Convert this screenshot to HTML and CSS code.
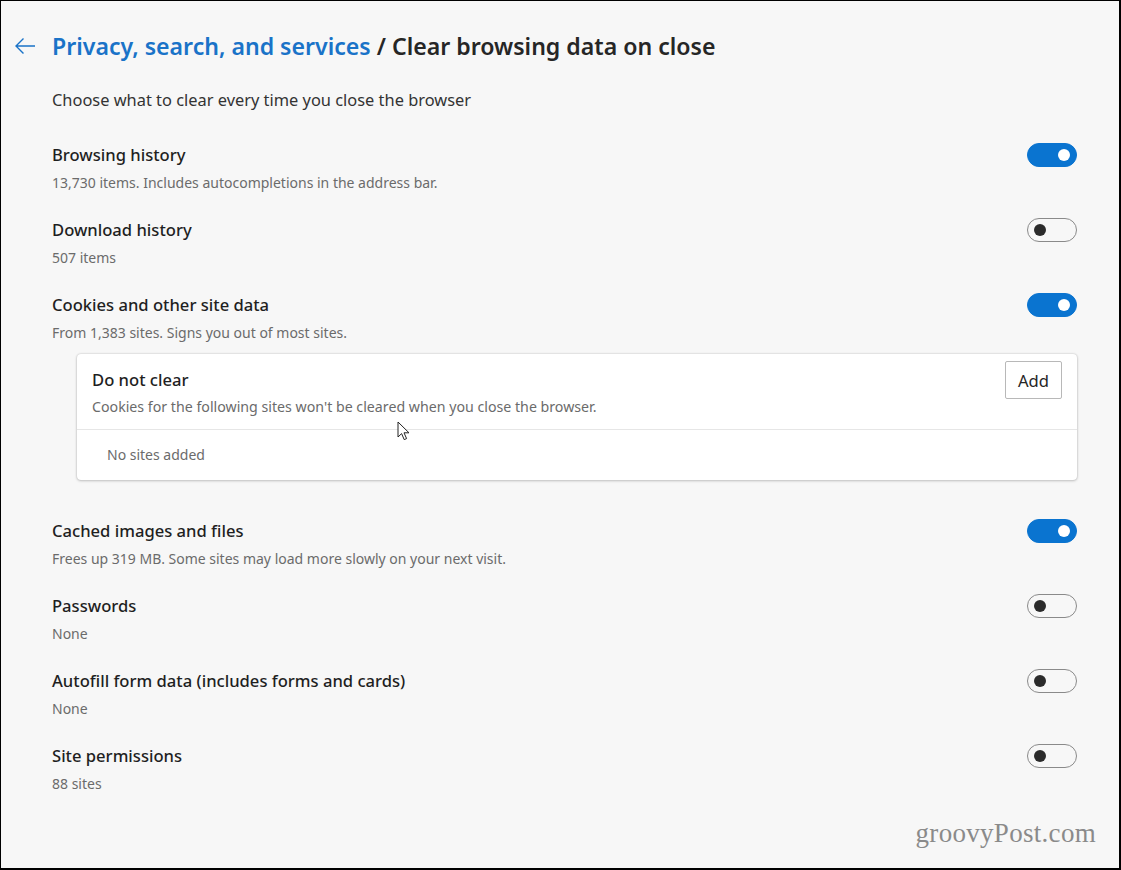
FILE: index.html
```html
<!DOCTYPE html>
<html>
<head>
<meta charset="utf-8">
<link rel="stylesheet" href="styles.css">
</head>
<body>
<div class="frame">
  <header class="header">
    <svg class="back" width="22" height="18" viewBox="0 0 22 18"><path d="M21 9H2M9.5 1.5L2 9l7.5 7.5" fill="none" stroke="#1a73c8" stroke-width="1.4"/></svg>
    <h1 class="title"><span class="crumb">Privacy, search, and services</span> / Clear browsing data on close</h1>
  </header>
  <p class="intro">Choose what to clear every time you close the browser</p>

  <div class="row">
    <div class="text"><div class="name">Browsing history</div><div class="desc">13,730 items. Includes autocompletions in the address bar.</div></div>
    <span class="toggle on"></span>
  </div>
  <div class="row">
    <div class="text"><div class="name">Download history</div><div class="desc">507 items</div></div>
    <span class="toggle"></span>
  </div>
  <div class="row row-cookies">
    <div class="text"><div class="name">Cookies and other site data</div><div class="desc">From 1,383 sites. Signs you out of most sites.</div></div>
    <span class="toggle on"></span>
  </div>
  <div class="card">
    <div class="card-head">
      <div class="card-text">
        <div class="card-title">Do not clear</div>
        <div class="desc">Cookies for the following sites won't be cleared when you close the browser.</div>
      </div>
      <button class="add">Add</button>
    </div>
    <div class="card-empty">No sites added</div>
    <svg class="cursor" width="14" height="20" viewBox="0 0 14 20"><path d="M1 1v15l3.6-3.4 2.6 6 2.4-1-2.6-5.8H12z" fill="#fff" stroke="#222" stroke-width="1"/></svg>
  </div>
  <div class="row">
    <div class="text"><div class="name">Cached images and files</div><div class="desc">Frees up 319 MB. Some sites may load more slowly on your next visit.</div></div>
    <span class="toggle on"></span>
  </div>
  <div class="row">
    <div class="text"><div class="name">Passwords</div><div class="desc">None</div></div>
    <span class="toggle"></span>
  </div>
  <div class="row">
    <div class="text"><div class="name">Autofill form data (includes forms and cards)</div><div class="desc">None</div></div>
    <span class="toggle"></span>
  </div>
  <div class="row">
    <div class="text"><div class="name">Site permissions</div><div class="desc">88 sites</div></div>
    <span class="toggle"></span>
  </div>
  <div class="watermark">groovyPost.com</div>
</div>
</body>
</html>
```
FILE: styles.css
```css
html, body {
  margin: 0;
  padding: 0;
}
body {
  background: #f7f7f7;
  font-family: "Noto Sans", "Open Sans", sans-serif;
  color: #1b1b1b;
}
.frame {
  box-sizing: border-box;
  width: 1121px;
  height: 870px;
  border-top: 1px solid #000;
  border-left: 1px solid #000;
  border-right: 2px solid #000;
  border-bottom: 2px solid #000;
  padding: 29px 42px 0 51px;
  position: relative;
  overflow: hidden;
}
.header {
  display: flex;
  align-items: center;
  margin-left: -38px;
  height: 32px;
}
.back {
  width: 22px;
  height: 18px;
  margin-right: 16px;
}
.title {
  margin: 0;
  font-size: 23.1px;
  font-weight: 600;
  line-height: 32px;
  color: #262626;
}
.crumb {
  color: #1a73c8;
}
.intro {
  margin: 28px 0 0;
  font-size: 16.4px;
  line-height: 20px;
  color: #333;
}
.row {
  display: flex;
  justify-content: space-between;
  align-items: flex-start;
  padding: 13px 0 12px;
}
.intro + .row {
  margin-top: 20px;
}
.row-cookies {
  padding-bottom: 0;
}
.name {
  font-size: 16.6px;
  font-weight: 500;
  line-height: 24px;
  color: #1f1f1f;
}
.desc {
  margin-top: 6px;
  font-size: 14px;
  line-height: 20px;
  color: #6b6b6b;
}
.toggle {
  box-sizing: border-box;
  display: block;
  width: 50px;
  height: 24px;
  margin-top: 0;
  border-radius: 12px;
  border: 1px solid #8a8a8a;
  position: relative;
  flex: none;
}
.toggle::after {
  content: "";
  position: absolute;
  top: 5px;
  left: 6px;
  width: 12px;
  height: 12px;
  border-radius: 50%;
  background: #2b2b2b;
}
.toggle.on {
  background: #0a74d0;
  border-color: #0a74d0;
}
.toggle.on::after {
  left: auto;
  right: 6px;
  background: #fff;
}
.card {
  position: relative;
  margin: 11px 0 26px 25px;
  background: #fff;
  border-radius: 4px;
  box-shadow: 0 0 2px rgba(0,0,0,0.22), 0 1px 3px rgba(0,0,0,0.18);
}
.card-head {
  display: flex;
  justify-content: space-between;
  align-items: flex-start;
  padding: 0 15px 12px 15px;
  border-bottom: 1px solid #e6e6e6;
}
.card-text {
  padding-top: 14px;
}
.card-title {
  font-size: 16.6px;
  font-weight: 500;
  line-height: 24px;
  color: #1f1f1f;
}
.card-text .desc {
  margin-top: 5px;
  font-size: 14.2px;
}
.add {
  margin-top: 7px;
  width: 57px;
  height: 38px;
  background: #fff;
  border: 1px solid #b8b8b8;
  border-radius: 2px;
  font-family: inherit;
  font-size: 16.6px;
  color: #262626;
  padding: 0;
}
.card-empty {
  padding: 15px 30px 15px;
  font-size: 14px;
  line-height: 20px;
  color: #6b6b6b;
}
.cursor {
  position: absolute;
  left: 320px;
  top: 67px;
}
.watermark {
  position: absolute;
  right: 23px;
  bottom: 19px;
  font-family: "Liberation Serif", "DejaVu Serif", serif;
  font-size: 27px;
  color: #8a8a8a;
  letter-spacing: 0.3px;
}
```
